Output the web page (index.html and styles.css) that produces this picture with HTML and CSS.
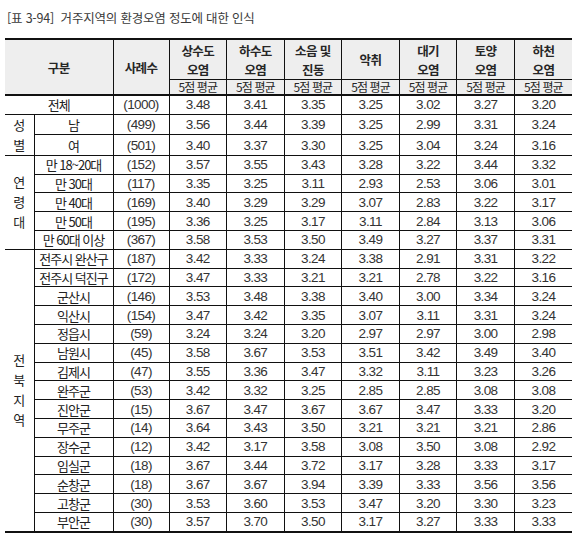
FILE: index.html
```html
<!DOCTYPE html>
<html lang="ko">
<head>
<meta charset="utf-8">
<title>거주지역의 환경오염 정도에 대한 인식</title>
<link rel="stylesheet" href="styles.css">
</head>
<body>
<div class="page">
  <div class="title">[표 3-94]&nbsp; 거주지역의 환경오염 정도에 대한 인식</div>
  <table class="tbl">
    <colgroup>
      <col class="c-cat"><col class="c-lab"><col class="c-cnt">
      <col class="c-val"><col class="c-val"><col class="c-val"><col class="c-val"><col class="c-val"><col class="c-val"><col class="c-val">
    </colgroup>
    <thead>
      <tr class="h1">
        <th colspan="2" rowspan="2">구분</th>
        <th rowspan="2">사례수</th>
        <th>상수도<br>오염</th>
        <th>하수도<br>오염</th>
        <th>소음 및<br>진동</th>
        <th>악취</th>
        <th>대기<br>오염</th>
        <th>토양<br>오염</th>
        <th>하천<br>오염</th>
      </tr>
      <tr class="h2">
        <th>5점 평균</th><th>5점 평균</th><th>5점 평균</th><th>5점 평균</th><th>5점 평균</th><th>5점 평균</th><th>5점 평균</th>
      </tr>
    </thead>
    <tbody>
      <tr class="grp"><td colspan="2" class="lab">전체</td><td class="n">(1000)</td><td class="n">3.48</td><td class="n">3.41</td><td class="n">3.35</td><td class="n">3.25</td><td class="n">3.02</td><td class="n">3.27</td><td class="n">3.20</td></tr>

      <tr class="grp"><td rowspan="2" class="cat">성<br>별</td><td class="lab">남</td><td class="n">(499)</td><td class="n">3.56</td><td class="n">3.44</td><td class="n">3.39</td><td class="n">3.25</td><td class="n">2.99</td><td class="n">3.31</td><td class="n">3.24</td></tr>
      <tr><td class="lab">여</td><td class="n">(501)</td><td class="n">3.40</td><td class="n">3.37</td><td class="n">3.30</td><td class="n">3.25</td><td class="n">3.04</td><td class="n">3.24</td><td class="n">3.16</td></tr>

      <tr class="grp"><td rowspan="5" class="cat">연<br>령<br>대</td><td class="lab">만 18~20대</td><td class="n">(152)</td><td class="n">3.57</td><td class="n">3.55</td><td class="n">3.43</td><td class="n">3.28</td><td class="n">3.22</td><td class="n">3.44</td><td class="n">3.32</td></tr>
      <tr><td class="lab">만 30대</td><td class="n">(117)</td><td class="n">3.35</td><td class="n">3.25</td><td class="n">3.11</td><td class="n">2.93</td><td class="n">2.53</td><td class="n">3.06</td><td class="n">3.01</td></tr>
      <tr><td class="lab">만 40대</td><td class="n">(169)</td><td class="n">3.40</td><td class="n">3.29</td><td class="n">3.29</td><td class="n">3.07</td><td class="n">2.83</td><td class="n">3.22</td><td class="n">3.17</td></tr>
      <tr><td class="lab">만 50대</td><td class="n">(195)</td><td class="n">3.36</td><td class="n">3.25</td><td class="n">3.17</td><td class="n">3.11</td><td class="n">2.84</td><td class="n">3.13</td><td class="n">3.06</td></tr>
      <tr><td class="lab">만 60대 이상</td><td class="n">(367)</td><td class="n">3.58</td><td class="n">3.53</td><td class="n">3.50</td><td class="n">3.49</td><td class="n">3.27</td><td class="n">3.37</td><td class="n">3.31</td></tr>

      <tr class="grp"><td rowspan="15" class="cat">전<br>북<br>지<br>역</td><td class="lab">전주시 완산구</td><td class="n">(187)</td><td class="n">3.42</td><td class="n">3.33</td><td class="n">3.24</td><td class="n">3.38</td><td class="n">2.91</td><td class="n">3.31</td><td class="n">3.22</td></tr>
      <tr><td class="lab">전주시 덕진구</td><td class="n">(172)</td><td class="n">3.47</td><td class="n">3.33</td><td class="n">3.21</td><td class="n">3.21</td><td class="n">2.78</td><td class="n">3.22</td><td class="n">3.16</td></tr>
      <tr><td class="lab">군산시</td><td class="n">(146)</td><td class="n">3.53</td><td class="n">3.48</td><td class="n">3.38</td><td class="n">3.40</td><td class="n">3.00</td><td class="n">3.34</td><td class="n">3.24</td></tr>
      <tr><td class="lab">익산시</td><td class="n">(154)</td><td class="n">3.47</td><td class="n">3.42</td><td class="n">3.35</td><td class="n">3.07</td><td class="n">3.11</td><td class="n">3.31</td><td class="n">3.24</td></tr>
      <tr><td class="lab">정읍시</td><td class="n">(59)</td><td class="n">3.24</td><td class="n">3.24</td><td class="n">3.20</td><td class="n">2.97</td><td class="n">2.97</td><td class="n">3.00</td><td class="n">2.98</td></tr>
      <tr><td class="lab">남원시</td><td class="n">(45)</td><td class="n">3.58</td><td class="n">3.67</td><td class="n">3.53</td><td class="n">3.51</td><td class="n">3.42</td><td class="n">3.49</td><td class="n">3.40</td></tr>
      <tr><td class="lab">김제시</td><td class="n">(47)</td><td class="n">3.55</td><td class="n">3.36</td><td class="n">3.47</td><td class="n">3.32</td><td class="n">3.11</td><td class="n">3.23</td><td class="n">3.26</td></tr>
      <tr><td class="lab">완주군</td><td class="n">(53)</td><td class="n">3.42</td><td class="n">3.32</td><td class="n">3.25</td><td class="n">2.85</td><td class="n">2.85</td><td class="n">3.08</td><td class="n">3.08</td></tr>
      <tr><td class="lab">진안군</td><td class="n">(15)</td><td class="n">3.67</td><td class="n">3.47</td><td class="n">3.67</td><td class="n">3.67</td><td class="n">3.47</td><td class="n">3.33</td><td class="n">3.20</td></tr>
      <tr><td class="lab">무주군</td><td class="n">(14)</td><td class="n">3.64</td><td class="n">3.43</td><td class="n">3.50</td><td class="n">3.21</td><td class="n">3.21</td><td class="n">3.21</td><td class="n">2.86</td></tr>
      <tr><td class="lab">장수군</td><td class="n">(12)</td><td class="n">3.42</td><td class="n">3.17</td><td class="n">3.58</td><td class="n">3.08</td><td class="n">3.50</td><td class="n">3.08</td><td class="n">2.92</td></tr>
      <tr><td class="lab">임실군</td><td class="n">(18)</td><td class="n">3.67</td><td class="n">3.44</td><td class="n">3.72</td><td class="n">3.17</td><td class="n">3.28</td><td class="n">3.33</td><td class="n">3.17</td></tr>
      <tr><td class="lab">순창군</td><td class="n">(18)</td><td class="n">3.67</td><td class="n">3.67</td><td class="n">3.94</td><td class="n">3.39</td><td class="n">3.33</td><td class="n">3.56</td><td class="n">3.56</td></tr>
      <tr><td class="lab">고창군</td><td class="n">(30)</td><td class="n">3.53</td><td class="n">3.60</td><td class="n">3.53</td><td class="n">3.47</td><td class="n">3.20</td><td class="n">3.30</td><td class="n">3.23</td></tr>
      <tr><td class="lab">부안군</td><td class="n">(30)</td><td class="n">3.57</td><td class="n">3.70</td><td class="n">3.50</td><td class="n">3.17</td><td class="n">3.27</td><td class="n">3.33</td><td class="n">3.33</td></tr>
    </tbody>
  </table>
</div>
</body>
</html>
```

FILE: styles.css
```css
html, body {
  margin: 0;
  padding: 0;
  background: #ffffff;
}

body {
  font-family: "Noto Sans CJK KR", "Noto Sans", sans-serif;
  color: #1e1e1e;
}

.page {
  padding-left: 5px;
}

.title {
  height: 38px;
  box-sizing: border-box;
  padding: 9px 0 0 2px;
  font-size: 12.5px;
  line-height: 18px;
  color: #3a3a3a;
  letter-spacing: -0.2px;
}

.tbl {
  border-collapse: collapse;
  table-layout: fixed;
  width: 567px;
  border-top: 2px solid #111111;
  border-bottom: 2px solid #111111;
  border-left: hidden;
  border-right: hidden;
}

.c-cat { width: 29px; }
.c-lab { width: 79px; }
.c-cnt { width: 56px; }
.c-val { width: 57.57px; }

.tbl th,
.tbl td {
  border: 1px solid #111111;
  padding: 0;
  text-align: center;
  vertical-align: middle;
  overflow: hidden;
  white-space: nowrap;
}

.tbl th {
  background: #eeeeee;
  font-weight: 700;
  font-size: 12.5px;
  line-height: 19px;
  letter-spacing: -0.6px;
  color: #262626;
}

.h1 th {
  height: 39px;
}

.h2 th {
  height: 14px;
  font-weight: 400;
  font-size: 12px;
  line-height: 14px;
  letter-spacing: -0.9px;
}

.tbl thead tr.h2 th,
.tbl thead tr.h1 th[rowspan] {
  border-bottom: 2px solid #111111;
}

.tbl tbody td {
  height: 17.8px;
  line-height: 17px;
}

.lab {
  font-size: 13px;
  letter-spacing: -1px;
  color: #222222;
}

.cat {
  font-size: 13px;
  line-height: 20px !important;
  color: #222222;
}

.n {
  font-family: "Liberation Sans", Arial, sans-serif;
  font-size: 13.5px;
  letter-spacing: -0.6px;
  color: #333333;
}
```
